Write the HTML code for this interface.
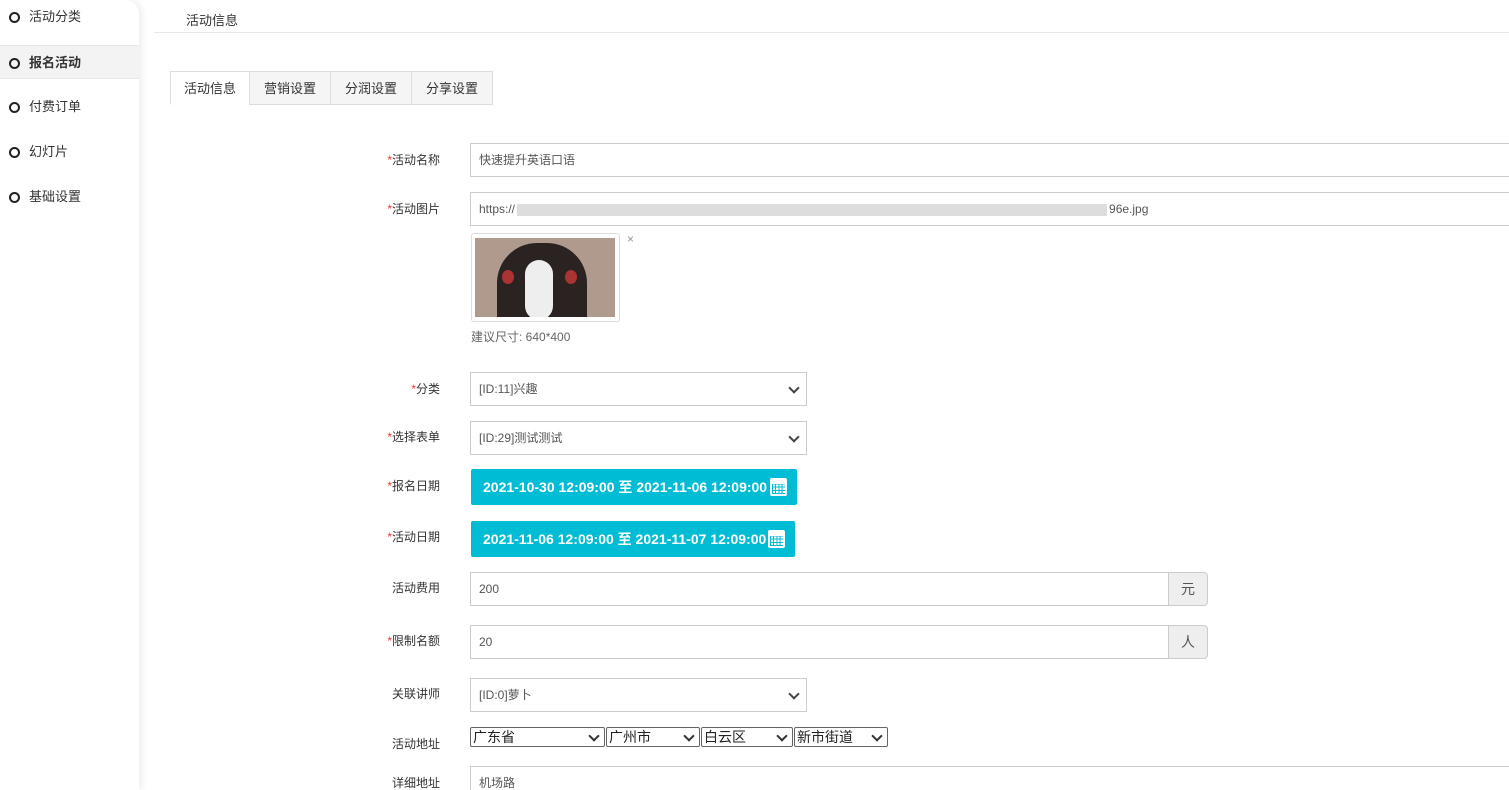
<!DOCTYPE html>
<html><head><meta charset="utf-8"><style>
*{box-sizing:border-box;margin:0;padding:0}
html,body{width:1509px;height:790px;overflow:hidden}
body{background:#fff;font-family:"Liberation Sans","Noto Sans CJK SC",sans-serif;font-size:12px;color:#333;position:relative}
.side{position:absolute;left:0;top:0;width:139px;height:790px;background:#fff;border-top-right-radius:14px;box-shadow:3px 0 8px rgba(0,0,0,.07)}
.it{position:absolute;left:0;width:139px;height:34px;line-height:34px;font-size:13px;color:#333}
.it i{position:absolute;left:9px;top:12px;width:11px;height:11px;border:2px solid #222;border-radius:50%}
.it span{position:absolute;left:29px}
.it.on{background:#f3f3f3;font-weight:bold;border-top:1px solid #e8e8e8;border-bottom:1px solid #e8e8e8}
.abs{position:absolute}
.tab{position:absolute;top:71px;height:34px;line-height:33px;text-align:center;font-size:13px;background:#f5f5f5;border:1px solid #ddd}
.lbl{position:absolute;right:1069px;font-size:12px;color:#333;white-space:nowrap}
.lbl b{color:#e33;font-weight:normal}
.inp{position:absolute;border:1px solid #ccc;background:#fff;height:34px;line-height:32px;padding-left:8px;font-size:12px;color:#555}
.sel:after{content:"";position:absolute;right:8px;top:11px;width:6px;height:6px;border-right:2px solid #444;border-bottom:2px solid #444;transform:rotate(45deg)}
.btn{position:absolute;background:#00bcd4;color:#fff;font-size:14px;font-weight:bold;height:36px;line-height:36px;padding-left:12px;border-radius:2px}
.cal{position:absolute;right:10px;top:9px;width:17px;height:18px;background:#fff;border-radius:2px}
.cal:before{content:"";position:absolute;left:2px;top:6px;width:13px;height:10px;background:repeating-linear-gradient(90deg,#00bcd4 0 1px,transparent 1px 3.2px),repeating-linear-gradient(0deg,#00bcd4 0 1px,transparent 1px 3.2px)}
.add{position:absolute;width:40px;height:34px;border:1px solid #ccc;border-radius:0 4px 4px 0;background:#eee;text-align:center;line-height:32px;font-size:14px;color:#555}
.as{position:absolute;top:727px;height:20px;border:1px solid #666;border-radius:2px;font-size:14px;line-height:18px;padding-left:2px;color:#222}
.as:after{content:"";position:absolute;right:6px;top:4px;width:6px;height:6px;border-right:2px solid #333;border-bottom:2px solid #333;transform:rotate(45deg)}
</style></head><body>
<div class="side">
<div class="it" style="top:0"><i></i><span>活动分类</span></div>
<div class="it on" style="top:45px"><i></i><span>报名活动</span></div>
<div class="it" style="top:90px"><i></i><span>付费订单</span></div>
<div class="it" style="top:135px"><i></i><span>幻灯片</span></div>
<div class="it" style="top:180px"><i></i><span>基础设置</span></div>
</div>
<div class="abs" style="left:186px;top:10px;font-size:13px">活动信息</div>
<div class="abs" style="left:154px;top:32px;width:1355px;height:1px;background:#e8e8e8"></div>
<div class="tab" style="left:170px;width:80px;background:#fff;border-color:#ddd;border-bottom-color:#fff">活动信息</div>
<div class="tab" style="left:249px;width:82px">营销设置</div>
<div class="tab" style="left:330px;width:82px">分润设置</div>
<div class="tab" style="left:411px;width:82px">分享设置</div>

<div class="lbl" style="top:151px"><b>*</b>活动名称</div>
<div class="inp" style="left:470px;top:143px;width:1045px">快速提升英语口语</div>
<div class="lbl" style="top:200px"><b>*</b>活动图片</div>
<div class="inp" style="left:470px;top:192px;width:1045px">https://<span style="display:inline-block;width:590px;height:12px;background:#ddd;vertical-align:middle;margin:0 2px"></span>96e.jpg</div>
<div class="abs" style="left:471px;top:233px;width:149px;height:89px;border:1px solid #ddd;border-radius:3px"></div>
<div class="abs" style="left:475px;top:238px;width:140px;height:79px;background:#b09a8e;overflow:hidden">
<div class="abs" style="left:22px;top:5px;width:90px;height:100px;background:#2b2222;border-radius:40px 40px 0 0"></div>
<div class="abs" style="left:50px;top:22px;width:28px;height:60px;background:#eee;border-radius:14px"></div>
<div class="abs" style="left:27px;top:32px;width:12px;height:14px;background:#a33;border-radius:50%"></div>
<div class="abs" style="left:90px;top:32px;width:12px;height:14px;background:#a33;border-radius:50%"></div>
</div>
<div class="abs" style="left:627px;top:232px;color:#999;font-size:12px">×</div>
<div class="abs" style="left:471px;top:328px;color:#666">建议尺寸: 640*400</div>

<div class="lbl" style="top:380px"><b>*</b>分类</div>
<div class="inp sel" style="left:470px;top:372px;width:337px">[ID:11]兴趣</div>
<div class="lbl" style="top:428px"><b>*</b>选择表单</div>
<div class="inp sel" style="left:470px;top:421px;width:337px">[ID:29]测试测试</div>
<div class="lbl" style="top:477px"><b>*</b>报名日期</div>
<div class="btn" style="left:471px;top:469px;width:326px">2021-10-30 12:09:00 至 2021-11-06 12:09:00<div class="cal"></div></div>
<div class="lbl" style="top:528px"><b>*</b>活动日期</div>
<div class="btn" style="left:471px;top:521px;width:324px">2021-11-06 12:09:00 至 2021-11-07 12:09:00<div class="cal"></div></div>
<div class="lbl" style="top:579px">活动费用</div>
<div class="inp" style="left:470px;top:572px;width:699px">200</div>
<div class="add" style="left:1168px;top:572px">元</div>
<div class="lbl" style="top:632px"><b>*</b>限制名额</div>
<div class="inp" style="left:470px;top:625px;width:699px">20</div>
<div class="add" style="left:1168px;top:625px">人</div>
<div class="lbl" style="top:685px">关联讲师</div>
<div class="inp sel" style="left:470px;top:678px;width:337px">[ID:0]萝卜</div>
<div class="lbl" style="top:735px">活动地址</div>
<div class="as" style="left:470px;width:135px">广东省</div>
<div class="as" style="left:606px;width:94px">广州市</div>
<div class="as" style="left:701px;width:92px">白云区</div>
<div class="as" style="left:794px;width:94px">新市街道</div>
<div class="lbl" style="top:774px">详细地址</div>
<div class="inp" style="left:470px;top:766px;width:1045px">机场路</div>
</body></html>
